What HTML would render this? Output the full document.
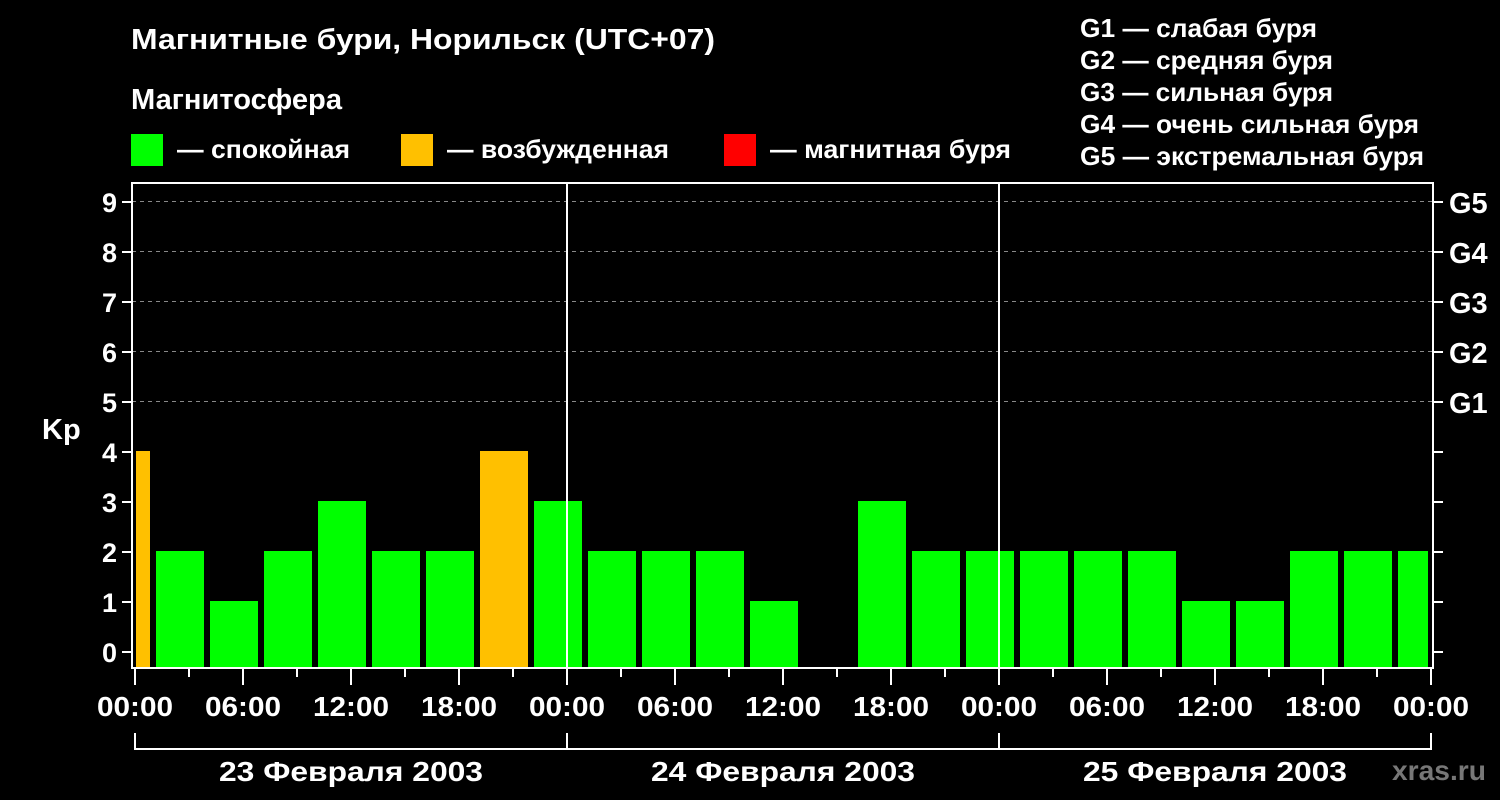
<!DOCTYPE html>
<html><head><meta charset="utf-8"><style>
html,body{margin:0;padding:0;background:#000;}
svg{display:block;font-family:"Liberation Sans",sans-serif;font-weight:bold;fill:#fff;}
</style></head><body>
<svg width="1500" height="800" viewBox="0 0 1500 800" xmlns="http://www.w3.org/2000/svg">
<rect width="1500" height="800" fill="#000"/>
<text x="131" y="49" font-size="29" textLength="584" lengthAdjust="spacingAndGlyphs">Магнитные бури, Норильск (UTC+07)</text>
<text x="131" y="109" font-size="29" textLength="211" lengthAdjust="spacingAndGlyphs">Магнитосфера</text>
<rect x="131" y="134" width="32" height="32" fill="#00ff00"/>
<text x="177" y="158" font-size="26" textLength="173" lengthAdjust="spacingAndGlyphs">— спокойная</text>
<rect x="401" y="134" width="32" height="32" fill="#ffc000"/>
<text x="447" y="158" font-size="26" textLength="222" lengthAdjust="spacingAndGlyphs">— возбужденная</text>
<rect x="724" y="134" width="32" height="32" fill="#ff0000"/>
<text x="770" y="158" font-size="26" textLength="241" lengthAdjust="spacingAndGlyphs">— магнитная буря</text>
<g font-size="26">
<text x="1080" y="37" textLength="237" lengthAdjust="spacingAndGlyphs">G1 — слабая буря</text>
<text x="1080" y="69" textLength="253" lengthAdjust="spacingAndGlyphs">G2 — средняя буря</text>
<text x="1080" y="101" textLength="253" lengthAdjust="spacingAndGlyphs">G3 — сильная буря</text>
<text x="1080" y="133" textLength="339" lengthAdjust="spacingAndGlyphs">G4 — очень сильная буря</text>
<text x="1080" y="165" textLength="344" lengthAdjust="spacingAndGlyphs">G5 — экстремальная буря</text>
</g>
<g stroke="#888" stroke-dasharray="4,4" stroke-width="1">
<line x1="132" x2="1432" y1="201.5" y2="201.5"/>
<line x1="132" x2="1432" y1="251.5" y2="251.5"/>
<line x1="132" x2="1432" y1="301.5" y2="301.5"/>
<line x1="132" x2="1432" y1="351.5" y2="351.5"/>
<line x1="132" x2="1432" y1="401.5" y2="401.5"/>
</g>
<g>
<rect x="136" y="451" width="14" height="217" fill="#ffc000"/>
<rect x="156" y="551" width="48" height="117" fill="#00ff00"/>
<rect x="210" y="601" width="48" height="67" fill="#00ff00"/>
<rect x="264" y="551" width="48" height="117" fill="#00ff00"/>
<rect x="318" y="501" width="48" height="167" fill="#00ff00"/>
<rect x="372" y="551" width="48" height="117" fill="#00ff00"/>
<rect x="426" y="551" width="48" height="117" fill="#00ff00"/>
<rect x="480" y="451" width="48" height="217" fill="#ffc000"/>
<rect x="534" y="501" width="48" height="167" fill="#00ff00"/>
<rect x="588" y="551" width="48" height="117" fill="#00ff00"/>
<rect x="642" y="551" width="48" height="117" fill="#00ff00"/>
<rect x="696" y="551" width="48" height="117" fill="#00ff00"/>
<rect x="750" y="601" width="48" height="67" fill="#00ff00"/>
<rect x="858" y="501" width="48" height="167" fill="#00ff00"/>
<rect x="912" y="551" width="48" height="117" fill="#00ff00"/>
<rect x="966" y="551" width="48" height="117" fill="#00ff00"/>
<rect x="1020" y="551" width="48" height="117" fill="#00ff00"/>
<rect x="1074" y="551" width="48" height="117" fill="#00ff00"/>
<rect x="1128" y="551" width="48" height="117" fill="#00ff00"/>
<rect x="1182" y="601" width="48" height="67" fill="#00ff00"/>
<rect x="1236" y="601" width="48" height="67" fill="#00ff00"/>
<rect x="1290" y="551" width="48" height="117" fill="#00ff00"/>
<rect x="1344" y="551" width="48" height="117" fill="#00ff00"/>
<rect x="1398" y="551" width="30" height="117" fill="#00ff00"/>
</g>
<g stroke="#fff" stroke-width="2" fill="none">
<line x1="567" x2="567" y1="182" y2="668"/>
<line x1="999" x2="999" y1="182" y2="668"/>
<rect x="132" y="183" width="1301" height="485"/>
<path d="M122 202H131M122 252H131M122 302H131M122 352H131M122 402H131M122 452H131M122 502H131M122 552H131M122 602H131M122 652H131"/>
<path d="M1433 202H1443M1433 252H1443M1433 302H1443M1433 352H1443M1433 402H1443M1433 452H1443M1433 502H1443M1433 552H1443M1433 602H1443M1433 652H1443"/>
<path d="M135 669V685M189 669V677M243 669V685M297 669V677M351 669V685M405 669V677M459 669V685M513 669V677M567 669V685M621 669V677M675 669V685M729 669V677M783 669V685M837 669V677M891 669V685M945 669V677M999 669V685M1053 669V677M1107 669V685M1161 669V677M1215 669V685M1269 669V677M1323 669V685M1377 669V677M1431 669V685"/>
<path d="M135 733V749H1431V733M567 733V749M999 733V749"/>
</g>
<g font-size="27" text-anchor="end">
<text x="117" y="212">9</text><text x="117" y="262">8</text><text x="117" y="312">7</text>
<text x="117" y="362">6</text><text x="117" y="412">5</text><text x="117" y="462">4</text>
<text x="117" y="512">3</text><text x="117" y="562">2</text><text x="117" y="612">1</text>
<text x="117" y="662">0</text>
</g>
<text x="42" y="439" font-size="29">Kp</text>
<g font-size="29">
<text x="1449" y="213">G5</text><text x="1449" y="263">G4</text><text x="1449" y="313">G3</text>
<text x="1449" y="363">G2</text><text x="1449" y="413">G1</text>
</g>
<g font-size="28" text-anchor="middle">
<text x="135" y="716" textLength="76" lengthAdjust="spacingAndGlyphs">00:00</text><text x="243" y="716" textLength="76" lengthAdjust="spacingAndGlyphs">06:00</text><text x="351" y="716" textLength="76" lengthAdjust="spacingAndGlyphs">12:00</text>
<text x="459" y="716" textLength="76" lengthAdjust="spacingAndGlyphs">18:00</text><text x="567" y="716" textLength="76" lengthAdjust="spacingAndGlyphs">00:00</text><text x="675" y="716" textLength="76" lengthAdjust="spacingAndGlyphs">06:00</text>
<text x="783" y="716" textLength="76" lengthAdjust="spacingAndGlyphs">12:00</text><text x="891" y="716" textLength="76" lengthAdjust="spacingAndGlyphs">18:00</text><text x="999" y="716" textLength="76" lengthAdjust="spacingAndGlyphs">00:00</text>
<text x="1107" y="716" textLength="76" lengthAdjust="spacingAndGlyphs">06:00</text><text x="1215" y="716" textLength="76" lengthAdjust="spacingAndGlyphs">12:00</text><text x="1323" y="716" textLength="76" lengthAdjust="spacingAndGlyphs">18:00</text>
<text x="1431" y="716" textLength="76" lengthAdjust="spacingAndGlyphs">00:00</text>
<text x="351" y="781" textLength="264" lengthAdjust="spacingAndGlyphs">23 Февраля 2003</text>
<text x="783" y="781" textLength="264" lengthAdjust="spacingAndGlyphs">24 Февраля 2003</text>
<text x="1215" y="781" textLength="264" lengthAdjust="spacingAndGlyphs">25 Февраля 2003</text>
</g>
<text x="1392" y="780" font-size="28" fill="#777" textLength="94" lengthAdjust="spacingAndGlyphs">xras.ru</text>
</svg>
</body></html>
